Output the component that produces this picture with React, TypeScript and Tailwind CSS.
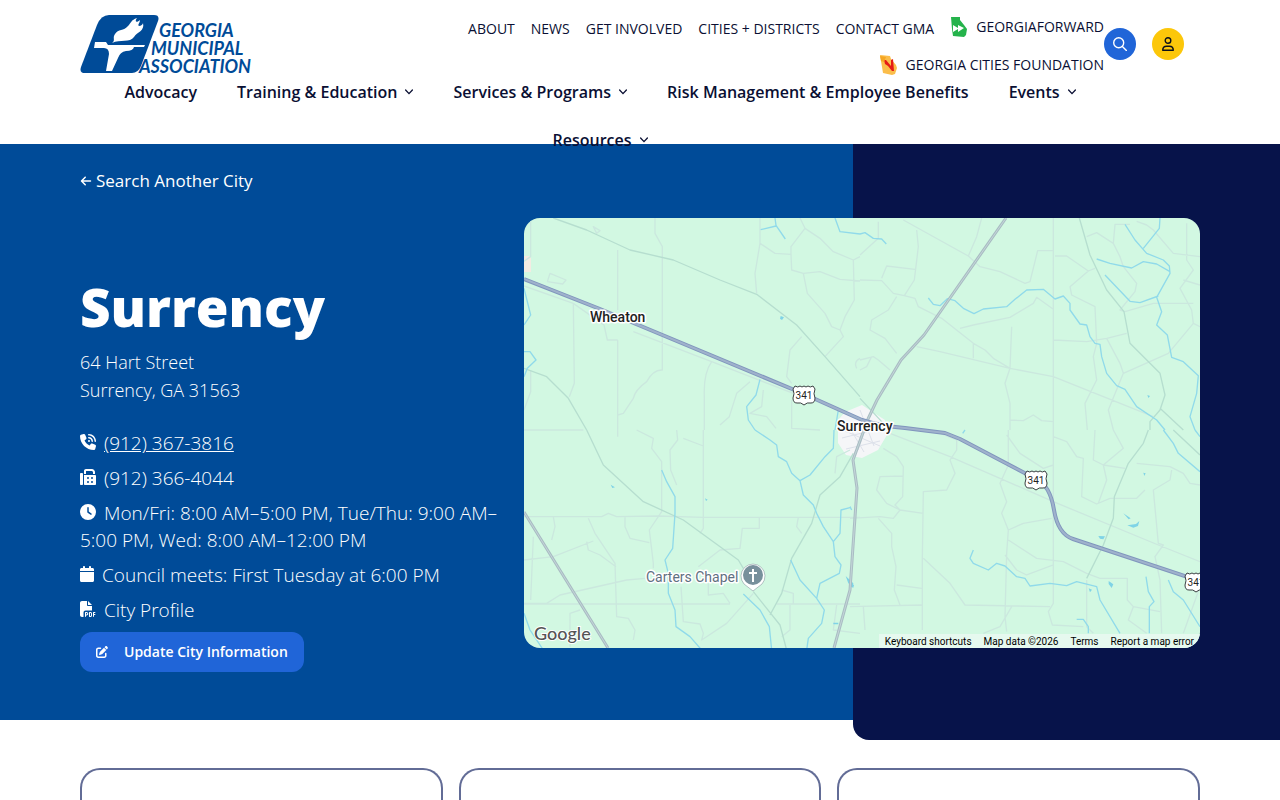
import React from "react";
import {
  FaArrowLeft,
  FaCalendar,
  FaClock,
  FaFax,
  FaFilePdf,
  FaPenToSquare,
  FaPhoneVolume,
} from "react-icons/fa6";

const topLinks = ["ABOUT", "NEWS", "GET INVOLVED", "CITIES + DISTRICTS", "CONTACT GMA"];

const mainLinks = [
  { label: "Advocacy", menu: false },
  { label: "Training & Education", menu: true },
  { label: "Services & Programs", menu: true },
  { label: "Risk Management & Employee Benefits", menu: false },
  { label: "Events", menu: true },
  { label: "Resources", menu: true },
];

function Logo() {
  return (
    <svg width="176" height="60" viewBox="0 0 176 60" role="img" aria-label="Georgia Municipal Association">
      <path
        d="M29 1H74Q80 1 78 7L61 52Q58 59 52 59H5Q-1 59 1 53L17 11Q21 1 29 1Z"
        fill="#004b98"
      />
      <path
        d="M32 29C36 26 32 24 35 20C38 15 44 17 48 12C51 9 51 6 57 4C54 8 57 9 60 6C60 9 57 11 59 12C61 12 63 10 63 9C65 17 57 18 54 23C50 29 40 25 32 29Z"
        fill="#fff"
      />
      <path d="M15 28H26L28 31H65L64 33H54Q53 37 46 37Q40 38 38 44L32 57H26L29 40Q29 34 24 34H14Z" fill="#fff" />
      <g fill="#004b98" fontFamily="Lato, sans-serif" fontStyle="italic" fontWeight="700" fontSize="18">
        <text x="79" y="23">GEORGIA</text>
        <text x="71" y="41">MUNICIPAL</text>
        <text x="59" y="59">ASSOCIATION</text>
      </g>
    </svg>
  );
}

function ForwardMark() {
  return (
    <svg width="18" height="20" viewBox="0 0 18 20" aria-hidden="true">
      <path d="M1 0H10L10 3L14 8L17 12L16 18L14 20L3 19L2 12Z" fill="#25b34b" />
      <path d="M3 8L8 11V8L14 11L8 15V12L3 15Z" fill="#fff" />
    </svg>
  );
}

function FoundationMark() {
  return (
    <svg width="19" height="20" viewBox="0 0 19 20" aria-hidden="true">
      <path d="M1 0L11 1L12 4L17 10L18 13L16 19L13 20L4 18L3 12Z" fill="#fbbd4a" />
      <path d="M5 5L7 5L12 11L12 5L14 4L15 16L13 16L9 11L6 9Z" fill="#e51b16" />
      <path d="M1 1L7 2L5 7L2 6Z" fill="#f5a623" />
    </svg>
  );
}

function Chevron() {
  return (
    <svg width="8" height="6" viewBox="0 0 8 6" fill="none" stroke="currentColor" strokeWidth="1.3" aria-hidden="true">
      <path d="M.6 1L4 4.6L7.4 1" strokeLinecap="round" />
    </svg>
  );
}

function Header() {
  return (
    <header className="relative z-10 h-36 bg-white text-[#0a0f33]">
      <div className="mx-auto flex max-w-[1120px] items-start">
        <div className="min-w-0 flex-1">
          <div className="flex h-[68px] items-start justify-between">
            <a href="#home" className="mt-3.5 shrink-0">
              <Logo />
            </a>
            <nav aria-label="Secondary" className="flex flex-1 flex-wrap justify-end gap-x-4 pt-2 text-sm">
              {topLinks.map((label) => (
                <a key={label} href="#top" className="flex h-[38px] items-center pt-1">
                  {label}
                </a>
              ))}
              <a href="#forward" className="flex h-[38px] items-center gap-2">
                <ForwardMark />
                GEORGIAFORWARD
              </a>
              <a href="#foundation" className="flex h-[38px] items-center gap-2">
                <FoundationMark />
                GEORGIA CITIES FOUNDATION
              </a>
            </nav>
          </div>
          <nav aria-label="Main" className="flex flex-wrap justify-center pl-4 text-base font-semibold">
            {mainLinks.map(({ label, menu }) => (
              <a key={label} href="#main" className="flex h-12 items-center gap-2 px-5 whitespace-nowrap">
                {label}
                {menu && <Chevron />}
              </a>
            ))}
          </nav>
        </div>
        <div className="mt-7 mr-4 flex gap-4">
          <button aria-label="Search" className="flex size-8 items-center justify-center rounded-full bg-[#2065d8] text-white">
            <svg width="14" height="14" viewBox="0 0 14 14" fill="none" stroke="currentColor" strokeWidth="1.4" strokeLinecap="round" aria-hidden="true">
              <circle cx="5.7" cy="5.7" r="5" />
              <path d="M9.4 9.4L13.4 13.4" />
            </svg>
          </button>
          <button aria-label="Account" className="flex size-8 items-center justify-center rounded-full bg-[#fcc70a] text-[#0a0f1a]">
            <svg width="12" height="14" viewBox="0 0 12 14" fill="none" stroke="currentColor" strokeWidth="1.4" aria-hidden="true">
              <circle cx="6" cy="3.5" r="2.8" />
              <path d="M.7 13.3C.7 10.8 2.3 9.2 4.6 9.2H7.4C9.7 9.2 11.3 10.8 11.3 13.3Z" strokeLinejoin="round" />
            </svg>
          </button>
        </div>
      </div>
    </header>
  );
}

/* Each quadrant of the map is drawn on its own grid of one third of a pixel. */
const quadrants = {
  nw: "translate(520 210) scale(.33333)",
  ne: "translate(860 210) scale(.33333)",
  sw: "translate(520 430) scale(.33333)",
  se: "translate(850 430) scale(.33333)",
};

const lanes = {
  nw: [
    "M32 20V140L10 155", "M405 24V70L427 110V480Q400 478 380 515Q345 540 340 565L310 610L293 615",
    "M293 120V300M293 390V660", "M12 228L160 280L252 345L262 390H293M340 365L575 455L820 550M160 280L163 520L148 560",
    "M720 24V100L705 190L710 250", "M720 100L765 130L813 133L815 180L850 190L900 185L960 208L1020 213",
    "M840 24L855 55L813 110V133M855 55L900 85L940 125L1000 150L1020 140M1000 150L1003 270L975 320L960 360L970 380L915 440",
    "M850 190L862 250L915 310L935 350L960 360", "M845 380L810 420L800 500L815 520M575 455Q550 490 553 560V660",
    "M690 515L650 550L628 620L600 645M815 570V655L900 660M730 540L725 590L690 610L740 620L768 655M12 660H190",
    "M32 480V545L12 600M82 215L90 190L138 210L128 222L82 215M220 50L240 62L230 70Z", "M1020 445Q1000 455 1010 475",
  ],
  ne: [
    "M130 30L325 138L360 170L420 185L495 220L510 215L533 122H580V24", "M365 24L350 80L325 138M55 35V85L0 135",
    "M170 60L175 110L163 210L133 257L100 250L65 212L0 210M65 205L80 168L165 178", "M133 257L165 265L175 290L245 325L340 400L375 420L400 445L450 475",
    "M110 260L85 300L35 330L30 360L75 385L110 430", "M170 410L240 425L450 475L580 500L880 620",
    "M580 122V660M300 355L340 345L450 322L520 280L530 262L580 298M455 350L450 475L435 520L450 580V660M340 400V445",
    "M585 138H620L685 183L705 175M685 183L630 230L635 255L705 290L710 400L700 440L710 510L675 580L682 660",
    "M680 80L710 68L760 100L780 140L790 170L830 220L825 245L780 300L795 305L880 280H1000M760 100L765 43H810",
    "M580 390L680 395L740 385L800 370M740 385L780 460L790 490L745 600L760 660M790 490L925 430L1000 340L995 300L960 235L1000 180L980 150V40",
    "M830 34L860 45L880 60L940 130L1020 140M970 210L1020 225M1000 340L1020 350M450 630L490 632L520 615L545 632L580 635",
    "M0 450L40 440L55 450L90 480M0 480L20 470L35 440",
  ],
  sw: [
    "M10 260L245 260L265 250L290 260L415 258L550 262H1020M425 120V245L388 300L400 400V415",
    "M350 0L400 25L395 55L425 95V120M470 0L473 30L450 60L452 120L470 165M550 0V295L540 310M490 25L550 48",
    "M293 0V20M100 260L105 290L95 330M12 390L100 380L220 333M205 265L225 310L285 400L290 560L325 565L345 600L340 630",
    "M315 260V290L330 325L388 338M40 320L32 510M12 520H80L120 495L320 450L375 445",
    "M10 522H630M770 522H1020M150 650V550L180 540", "M483 470L490 575L540 582L550 610L545 630L620 580L700 490",
    "M535 410L600 360L660 355L667 295H718V262M565 460V495L610 490L630 520M810 525V600L785 620M950 525L940 600L1020 610",
    "M835 262L830 290L845 310M990 60L950 80L945 130M200 335L205 360L240 375L288 410M785 480L820 490V520",
  ],
  se: [
    "M120 10L300 80L450 145L610 215L925 345L1050 395", "M100 55L140 80L160 110L158 200L135 225L150 240L220 250",
    "M160 138L90 140L80 180L110 220L150 240L130 265L90 260L0 265", "M245 0L320 30V60L300 90L315 130L290 180L220 185L217 385V600",
    "M85 265L125 310V350L138 410L133 480L150 525", "M475 0V105L450 160L470 215L455 250L475 300L470 370L465 560L470 605",
    "M470 15L510 70L580 115L610 105M610 0V520L595 545L607 585L700 590", "M475 300L520 280L605 265M475 330L560 385L640 395L710 430L750 445H832V510L850 530",
    "M465 375L500 420L530 435L610 405M220 385L300 460L345 525L600 530M0 530L215 525M140 465L215 475",
    "M610 20L650 35L680 80L700 85L695 200L740 222L780 205H860L885 180",
    "M735 0L730 90L760 105L820 55L790 0M760 105L825 115M760 105L770 150L745 220",
    "M860 100L960 110L1000 130L1020 160L1050 165M965 120L960 150L910 180L925 340L940 345L915 380L930 450L935 610",
    "M710 450V590L730 610M850 530L835 570L890 610M850 530L930 545M40 530L45 600M485 530L450 590L400 610M1050 470L1000 610",
  ],
};

const roads = {
  nw: ["M100 24L200 60L330 120L460 150L600 210L710 253L830 345L915 440L1020 560", "M12 475L80 500L145 565L200 660"],
  ne: ["M658 24L690 135L740 240L792 305L810 400L900 490L915 555L900 600L870 635V660M900 595L970 660", "M0 565L70 640"],
  sw: ["M200 0L250 105L370 215L490 270L655 390L670 415M700 485L780 585L800 660", "M1000 70L960 140L900 195L875 280L815 385L785 490L750 555"],
  se: ["M895 0L880 40L835 100L793 200L790 265L760 345L710 445M970 0L1050 75"],
};

const rivers = {
  nw: [
    "M12 235L32 315L12 345M12 425L30 425L48 450L22 475L12 500", "M765 24L768 46L796 87M768 48L722 59",
    "M945 24L960 65L1020 72", "M720 508L708 555L680 590L685 630L705 660M955 600L945 660",
  ],
  ne: [
    "M0 72L15 68L40 85L65 87L79 102", "M205 264L220 283L240 287L262 266L285 272L310 295L342 311L370 297L440 290L465 268L500 240L550 238L585 267L610 258L630 280V300L660 342L680 345L690 380L705 400L720 403L725 440L740 490L770 527L795 538L830 590L890 630L915 660",
    "M900 24L898 55L850 115M795 43L825 90L860 130L910 150L928 168L930 190L890 262L905 305L890 345L922 375L935 442L970 455L1015 497L1010 550L990 620L1005 660",
    "M710 147L750 160L815 174L850 155L890 162L930 185M735 195L810 274L840 278L895 258",
  ],
  sw: [
    "M425 120L440 155L465 200V250L458 355L435 390L445 430V490L465 540L468 590L510 620L545 660", "M705 0L750 30L770 45L775 80L800 95L815 130L840 152L870 135L915 80L940 55L942 0",
    "M840 152L850 195L880 225L890 250L910 290L940 335L945 380L963 405L958 430L900 460L890 505L913 540L905 580L865 625L860 660M940 335L960 310L963 240L993 232",
    "M812 390L840 450L890 505M670 492L720 540L748 590L755 660M12 550L30 600L70 660",
  ],
  se: [
    "M370 360L360 385L370 400L415 420L440 400L465 408L500 440L525 445L540 468L600 460L650 467L680 455L740 470L750 510L810 610",
    "M680 568H700L715 590V610M888 440L895 485L912 515L898 530V610M955 450L970 485L1000 510L1050 590M940 0L970 40L985 70L1050 125",
    "M345 0L338 10M0 230L5 240M1035 0L1050 20",
  ],
};

const ponds = {
  nw: "M782 318L792 322L786 330L780 326Z",
  ne: "M862 555L870 558L865 564Z",
  sw: "M272 164L285 172L277 174ZM555 205L563 209L558 213ZM977 438L1000 460L998 472L985 460ZM940 578H955V583H940Z",
  se: "M820 250L842 265L836 268ZM832 286L858 282L868 273L864 288L850 293ZM745 318L765 319L760 328L750 326ZM776 453L790 463L785 474L776 462ZM716 475L726 479L720 487ZM880 128L887 130L883 138ZM0 460L12 465L10 473L2 470Z",
};

type Quadrant = keyof typeof quadrants;
const order: Quadrant[] = ["nw", "ne", "sw", "se"];

function Shield({ x, y }: { x: number; y: number }) {
  return (
    <g transform={`translate(${x} ${y})`}>
      <path
        d="M-9-9Q-6-7-4-9Q-2-7 0-9Q2-7 4-9Q6-7 9-9L11-6Q9-1 11 3Q11 8 7 8Q3 7 0 10Q-3 7-7 8Q-11 8-11 3Q-9-1-11-6Z"
        fill="#fff"
        stroke="#3c4043"
      />
      <text y="4" textAnchor="middle" fontSize="10" fill="#222">
        341
      </text>
    </g>
  );
}

function CityMap() {
  return (
    <div className="relative h-[430px] overflow-hidden rounded-2xl bg-[#d2f8e2]">
      <svg
        className="h-full w-full"
        viewBox="524 218 676 430"
        preserveAspectRatio="xMidYMid slice"
        fill="none"
        fontFamily="Roboto, sans-serif"
        role="img"
        aria-label="Map of Surrency"
      >
        <path d="M838 420L845 412L862 405L885 420L887 435L878 450L862 458L846 455L838 443Z" fill="#f5f6f8" />
        <path d="M524 256H531V272H524Z" fill="#f3ebe2" />
        {order.map((q) => (
          <g key={q} transform={quadrants[q]} strokeLinejoin="round">
            <path d={lanes[q].join("")} stroke="#cbe8de" strokeWidth="4" />
            <path d={roads[q].join("")} stroke="#b6decf" strokeWidth="4" />
            <path d={rivers[q].join("")} stroke="#90daea" strokeWidth="4" />
            <path d={ponds[q]} fill="#7fd3e6" />
          </g>
        ))}
        <path d="M842 438L882 428M846 449L880 441M848 425L864 452M860 410L874 446M870 416L858 450M838 428L880 446" stroke="#dde1ea" />
        <g strokeLinejoin="round">
          <path d="M1006 218L924 335L901 360L877 400L868 419L853 460L857 488L850 590L834 648M524 512L608 648" stroke="#a9bcc3" strokeWidth="3" />
          <path d="M1006 218L924 335L901 360L877 400L868 419L853 460L857 488L850 590L834 648M524 512L608 648" stroke="#c3d6d8" strokeWidth="1" />
          <path d="M524 279L600 309L804 394L862 420Q880 426 905 428L945 433L960 439L1036 479Q1050 485 1054 510Q1058 534 1073 539L1200 581" stroke="#8096bd" strokeWidth="4" />
          <path d="M524 279L600 309L804 394L862 420Q880 426 905 428L945 433L960 439L1036 479Q1050 485 1054 510Q1058 534 1073 539L1200 581" stroke="#9fb2cc" strokeWidth="2" />
        </g>
        <Shield x={804} y={395} />
        <Shield x={1036} y={480} />
        <Shield x={1196} y={582} />
        <g fontSize="14" fontWeight="500" fill="#222" stroke="#fff" strokeWidth="3" paintOrder="stroke" strokeLinejoin="round">
          <text x="590" y="322">Wheaton</text>
          <text x="837" y="431">Surrency</text>
          <text x="646" y="582" fill="#5f7080" fontWeight="400">Carters Chapel</text>
        </g>
        <path d="M753 591L744 584A12 12 0 1 1 762 584Z" fill="#fff" stroke="#8c9ba3" strokeWidth=".6" />
        <circle cx="753" cy="575" r="10" fill="#78909c" />
        <path d="M753 569V582M749 573H757" stroke="#fff" strokeWidth="2" />
        <text x="534" y="640" fontFamily="Lato, sans-serif" fontSize="18" fontWeight="500" fill="#555" stroke="#fff" strokeWidth="2" paintOrder="stroke">
          Google
        </text>
      </svg>
      <div className="absolute right-0 bottom-0 flex h-3.5 items-center bg-[#e6f9ef] font-[Roboto,sans-serif] text-[10px] text-black">
        <button className="px-1.5">Keyboard shortcuts</button>
        <span className="px-1.5">Map data ©2026</span>
        <a href="#terms" className="px-1.5">Terms</a>
        <a href="#report" className="px-1.5">Report a map error</a>
      </div>
    </div>
  );
}

export default function App() {
  return (
    <div className="flex min-h-screen flex-col bg-white font-['Open_Sans',sans-serif]">
      <Header />
      <main className="flex flex-1 flex-col">
        <section className="relative h-[576px] bg-[#004b98] text-white">
          <div className="absolute top-0 right-0 -bottom-5 w-1/3 rounded-bl-2xl bg-[#07134a]" />
          <div className="relative mx-auto max-w-[1120px] pt-6">
            <a href="#search" className="flex h-[26px] w-fit items-center gap-1 text-[17px]">
              <FaArrowLeft size={12} />
              Search Another City
            </a>
            <div className="mt-6 grid grid-cols-[428px_1fr] gap-4">
              <div className="pt-14 text-lg leading-7 font-light">
                <h1 className="text-[53px] leading-[66px] font-extrabold">Surrency</h1>
                <address className="mt-2 not-italic">
                  64 Hart Street
                  <br />
                  Surrency, GA 31563
                </address>
                <ul className="mt-[26px] space-y-2 text-[19px] leading-[27px]">
                  <li>
                    <FaPhoneVolume size={16} className="mr-2 inline align-baseline" />
                    <a href="tel:9123673816" className="underline">(912) 367-3816</a>
                  </li>
                  <li>
                    <FaFax size={16} className="mr-2 inline align-baseline" />
                    (912) 366-4044
                  </li>
                  <li>
                    <FaClock size={16} className="mr-2 inline align-baseline" />
                    Mon/Fri: 8:00 AM–5:00 PM, Tue/Thu: 9:00 AM–5:00 PM, Wed: 8:00 AM–12:00 PM
                  </li>
                  <li>
                    <FaCalendar size={16} className="mr-2 inline w-3.5 align-baseline" />
                    Council meets: First Tuesday at 6:00 PM
                  </li>
                  <li>
                    <FaFilePdf size={16} className="mr-2 inline align-baseline" />
                    <a href="#profile">City Profile</a>
                  </li>
                </ul>
                <button className="mt-2 flex h-10 items-center gap-4 rounded-xl bg-[#2065d8] px-4 text-sm font-semibold">
                  <FaPenToSquare size={12} />
                  Update City Information
                </button>
              </div>
              <CityMap />
            </div>
          </div>
        </section>
        <section className="mx-auto grid w-full max-w-[1120px] flex-1 grid-cols-3 gap-4 pt-12">
          <div className="rounded-t-[20px] border-2 border-b-0 border-[#626c96]" />
          <div className="rounded-t-[20px] border-2 border-b-0 border-[#626c96]" />
          <div className="rounded-t-[20px] border-2 border-b-0 border-[#626c96]" />
        </section>
      </main>
    </div>
  );
}
